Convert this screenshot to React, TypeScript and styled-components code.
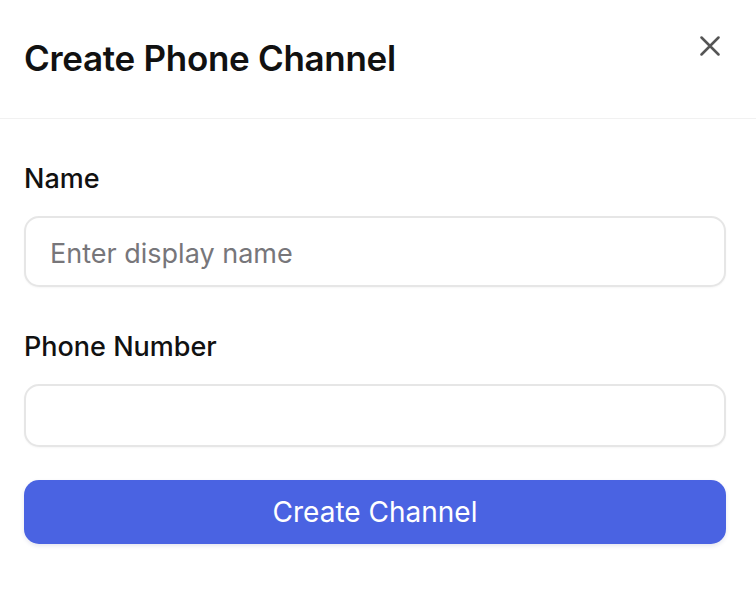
import React from "react";
import styled, { createGlobalStyle } from "styled-components";

const GlobalStyle = createGlobalStyle`
  html, body { margin: 0; padding: 0; background: #ffffff; }
  body { font-family: Inter, "Noto Sans", "Liberation Sans", sans-serif; -webkit-font-smoothing: antialiased; }
  * { box-sizing: border-box; }
`;

const Dialog = styled.div`
  width: 756px;
  min-height: 614px;
  background: #ffffff;
  display: flex;
  flex-direction: column;
`;

const Header = styled.header`
  height: 119px;
  border-bottom: 1px solid #f1f1f1;
  display: flex;
  align-items: center;
  justify-content: space-between;
  padding: 0 24px 0 24px;
`;

const Title = styled.h2`
  margin: 0;
  margin-top: -2px;
  font-size: 35px;
  line-height: 42px;
  font-weight: 600;
  color: #111111;
  letter-spacing: -0.3px;
`;

const CloseButton = styled.button`
  border: none;
  background: transparent;
  padding: 0;
  width: 26px;
  height: 26px;
  display: flex;
  align-items: center;
  justify-content: center;
  align-self: flex-start;
  margin-top: 33px;
  margin-right: 9px;
  cursor: pointer;
`;

const Form = styled.form`
  display: flex;
  flex-direction: column;
  padding: 44px 30px 0 24px;
`;

const Field = styled.div`
  display: flex;
  flex-direction: column;
  gap: 21px;
  margin-bottom: 44px;
  &:last-of-type { margin-bottom: 33px; }
`;

const Label = styled.label`
  font-size: 27px;
  line-height: 32px;
  font-weight: 500;
  color: #111111;
`;

const Input = styled.input<{ $h: number }>`
  width: 100%;
  height: ${(p) => p.$h}px;
  border: 2px solid #e6e6e6;
  border-radius: 15px;
  padding: 3px 24px 0 24px;
  font-family: inherit;
  font-size: 27px;
  color: #111;
  background: #fff;
  box-shadow: 0 1px 2px rgba(0, 0, 0, 0.04);
  outline: none;
  &::placeholder { color: #77767a; }
`;

const SubmitButton = styled.button`
  width: 702px;
  height: 64px;
  border: none;
  border-radius: 15px;
  background: #4a63e2;
  color: #ffffff;
  font-family: inherit;
  font-size: 28px;
  font-weight: 400;
  box-shadow: 0 2px 4px rgba(40, 50, 120, 0.12);
  cursor: pointer;
`;

export default function App() {
  return (
    <>
      <GlobalStyle />
      <Dialog>
        <Header>
          <Title>Create Phone Channel</Title>
          <CloseButton aria-label="Close" type="button">
            <svg width="20" height="20" viewBox="0 0 20 20" fill="none">
              <path d="M1.5 1.5 L18.5 18.5 M18.5 1.5 L1.5 18.5" stroke="#555555" strokeWidth="2.5" strokeLinecap="round" />
            </svg>
          </CloseButton>
        </Header>
        <Form onSubmit={(e) => e.preventDefault()}>
          <Field>
            <Label htmlFor="name">Name</Label>
            <Input id="name" $h={71} placeholder="Enter display name" />
          </Field>
          <Field>
            <Label htmlFor="phone">Phone Number</Label>
            <Input id="phone" $h={63} />
          </Field>
          <SubmitButton type="submit">Create Channel</SubmitButton>
        </Form>
      </Dialog>
    </>
  );
}
